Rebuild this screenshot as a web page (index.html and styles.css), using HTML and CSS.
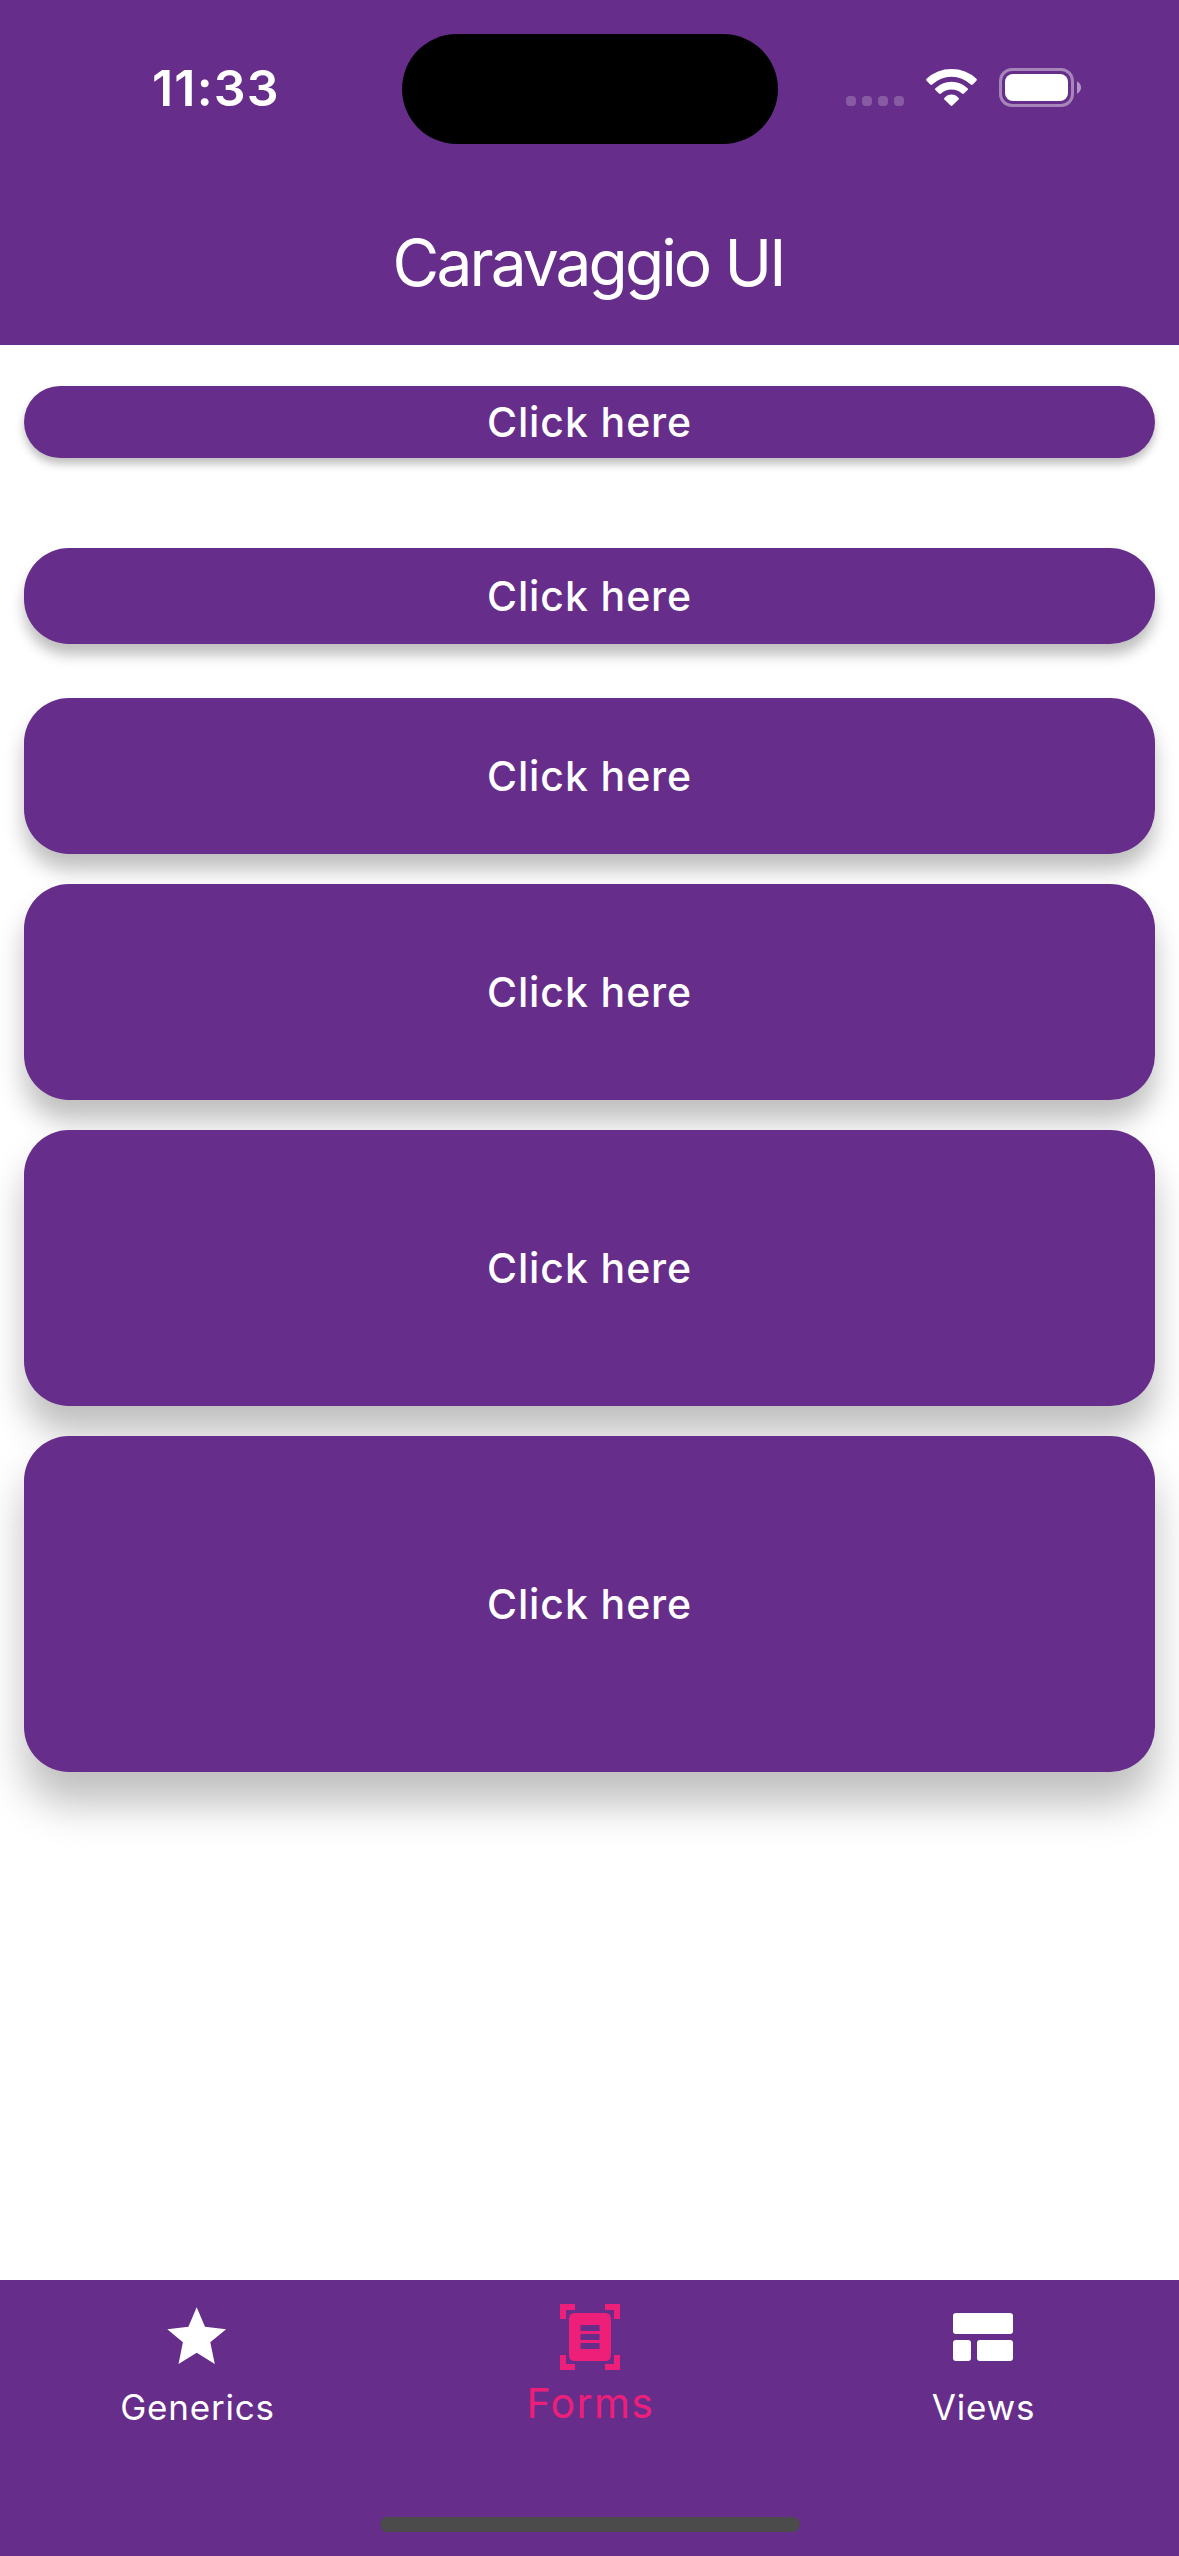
FILE: index.html
```html
<!DOCTYPE html>
<html lang="en">
<head>
<meta charset="utf-8">
<title>Caravaggio UI</title>
<link rel="stylesheet" href="styles.css">
</head>
<body>
<div class="screen">
  <header class="header">
    <div class="status">
      <div class="status-time">11:33</div>
      <div class="island"></div>
      <div class="status-icons">
        <div class="dots"><i></i><i></i><i></i><i></i></div>
        <svg class="wifi" viewBox="0 0 51 37" fill="#fff">
          <path d="M.6 9.8Q11 0 25.500 0T50.400 9.800Q51.300 10.900 50.400 11.800L46.800 15.600Q45.800 16.400 44.800 15.600Q36.500 7.700 25.500 7.700T6.200 15.600Q5.200 16.400 4.200 15.600L.6 11.800Q-.3 10.900.6 9.800Z"/>
          <path d="M9.400 19.300Q16 12.700 25.500 12.700T41.600 19.300Q42.400 20.200 41.600 21.100L38 24.500Q37 25.300 36 24.500Q31.500 20.500 25.500 20.500T15 24.500Q14 25.300 13 24.500L9.400 21.100Q8.600 20.200 9.400 19.300Z"/>
          <path d="M18.400 28.900Q21.400 25.500 25.500 25.500T32.600 28.900Q33.300 29.700 32.600 30.500L26.400 36.600Q25.500 37.300 24.600 36.600L18.400 30.500Q17.700 29.700 18.400 28.900Z"/>
        </svg>
        <svg class="battery" viewBox="0 0 82 39">
          <rect x="1.500" y="1.500" width="72" height="36" rx="11.500" fill="none" stroke="#fff" stroke-opacity=".42" stroke-width="3"/>
          <rect x="6" y="6" width="63" height="27" rx="8" fill="#fff"/>
          <path d="M78 13.300Q82 15.500 82 19.500T78 25.700Z" fill="#fff" fill-opacity=".5"/>
        </svg>
      </div>
    </div>
    <h1 class="title">Caravaggio UI</h1>
  </header>

  <main class="content">
    <button class="btn btn-1">Click here</button>
    <button class="btn btn-2">Click here</button>
    <button class="btn btn-3">Click here</button>
    <button class="btn btn-4">Click here</button>
    <button class="btn btn-5">Click here</button>
    <button class="btn btn-6">Click here</button>
  </main>

  <nav class="tabs">
    <a class="tab">
      <svg class="tab-icon" viewBox="0 0 72 72" fill="currentColor"><path d="M35.700 6.200L44 25.800L65.100 28.300L49.300 41.300L53.800 63L35.700 51.700L17.500 63L21.900 41.300L6.300 28.300L27.400 25.800Z"/></svg>
      <span class="tab-label">Generics</span>
    </a>
    <a class="tab tab-active">
      <svg class="tab-icon" viewBox="0 0 72 72" fill="currentColor" fill-rule="evenodd">
        <path d="M6 3H21V9H12V18H6ZM51 3H66V18H60V9H51ZM6 54H12V63H21V69H6ZM60 54H66V69H51V63H60Z"/>
        <path d="M21 12H51Q57 12 57 18V54Q57 60 51 60H21Q15 60 15 54V18Q15 12 21 12ZM26.500 24V30H45.500V24ZM26.500 33V39H45.500V33ZM26.500 42V48H45.500V42Z"/>
      </svg>
      <span class="tab-label">Forms</span>
    </a>
    <a class="tab">
      <svg class="tab-icon" viewBox="0 0 72 72" fill="currentColor"><rect x="6" y="12" width="60" height="21" rx="3"/><rect x="6" y="39" width="18" height="21" rx="3"/><rect x="30" y="39" width="36" height="21" rx="3"/></svg>
      <span class="tab-label">Views</span>
    </a>
    <div class="home-bar"></div>
  </nav>
</div>
</body>
</html>
```
FILE: styles.css
```css
* { box-sizing: border-box; }

body {
  margin: 0;
  background: #fff;
  font-family: Inter, "Liberation Sans", sans-serif;
  color: #fff;
}

.screen {
  width: 1179px;
  height: 2556px;
  display: flex;
  flex-direction: column;
  overflow: hidden;
}

.header {
  flex: none;
  height: 345px;
  background: #662d8b;
}

.status {
  height: 177px;
  display: grid;
  grid-template-columns: 402px 375.5px 401.5px;
  align-items: start;
}

.status-time {
  padding: 58px 0 0 152px;
  font-size: 50px;
  line-height: 60px;
  font-weight: 600;
  letter-spacing: 1.2px;
}

.island {
  margin-top: 34px;
  height: 110px;
  border-radius: 55px;
  background: #000;
}

.status-icons {
  display: flex;
  padding: 68px 0 0 68.5px;
}

.dots {
  display: flex;
  gap: 6px;
  padding-top: 28px;
}

.dots i {
  width: 10px;
  height: 10px;
  border-radius: 4px;
  background: rgba(255, 255, 255, 0.22);
}

.wifi {
  width: 51px;
  height: 37px;
  margin: 1px 22px 0;
}

.battery {
  width: 82px;
  height: 39px;
}

.title {
  margin: 0;
  padding: 45px 3px 0 0;
  text-align: center;
  font-size: 64px;
  line-height: 82px;
  font-weight: 400;
  letter-spacing: -2.9px;
}

.content {
  flex: 1;
  display: flex;
  flex-direction: column;
  padding: 41px 24px 0;
}

.btn {
  flex: none;
  border: 0;
  padding: 0;
  margin: 0 0 30px;
  border-radius: 45px;
  background: #662d8b;
  color: #fff;
  font: 500 41px/50px Inter, "Liberation Sans", sans-serif;
  letter-spacing: 0.9px;
}

.btn-1 { height: 72px; margin-bottom: 90px; border-radius: 36px; box-shadow: 0 6px 8px rgba(0, 0, 0, 0.25); }
.btn-2 { height: 96px; margin-bottom: 54px; box-shadow: 0 11px 13px rgba(0, 0, 0, 0.25); }
.btn-3 { height: 156px; box-shadow: 0 16px 20px rgba(0, 0, 0, 0.25); }
.btn-4 { height: 216px; box-shadow: 0 21px 27px rgba(0, 0, 0, 0.25); }
.btn-5 { height: 276px; box-shadow: 0 27px 34px rgba(0, 0, 0, 0.25); }
.btn-6 { height: 336px; box-shadow: 0 32px 42px rgba(0, 0, 0, 0.25); }

.tabs {
  position: relative;
  flex: none;
  height: 276px;
  display: grid;
  grid-template-columns: repeat(3, 1fr);
  background: #662d8b;
}

.tab {
  display: flex;
  flex-direction: column;
  align-items: center;
  padding-top: 21px;
}

.tab-icon {
  width: 72px;
  height: 72px;
}

.tab-label {
  margin-top: 12px;
  padding-left: 2px;
  font-size: 35px;
  line-height: 44px;
  font-weight: 400;
  letter-spacing: 0.8px;
}

.tab-active { color: #ee1f79; }

.tab-active .tab-label {
  margin-top: 8px;
  font-size: 41px;
  letter-spacing: 1.4px;
}

.home-bar {
  position: absolute;
  left: 380px;
  bottom: 24px;
  width: 420px;
  height: 15px;
  border-radius: 8px;
  background: #4b4b4b;
}
```
